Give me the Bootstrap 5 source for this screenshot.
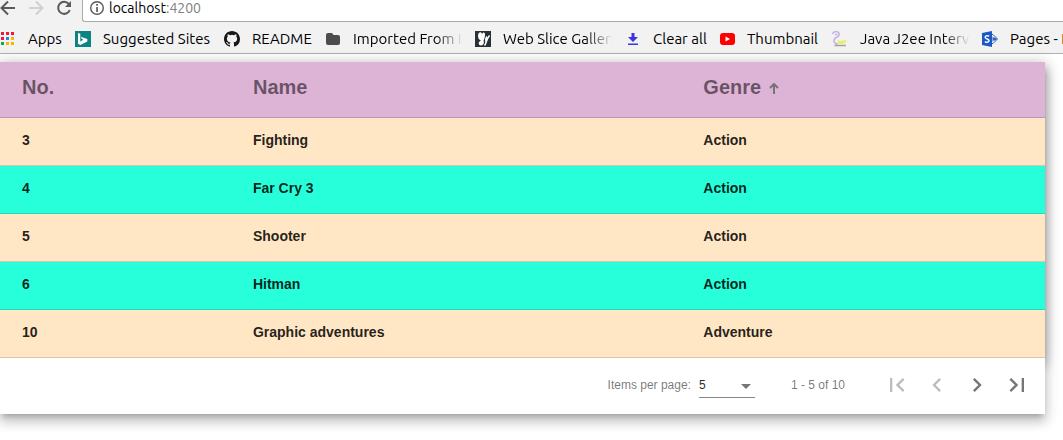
<!DOCTYPE html>
<html lang="en">
<head>
<meta charset="utf-8">
<meta name="viewport" content="width=device-width, initial-scale=1">
<title>Games table</title>
<link href="https://cdn.jsdelivr.net/npm/bootstrap@5.3.0/dist/css/bootstrap.min.css" rel="stylesheet">
<style>
  body { font-family: "Liberation Sans", Arial, sans-serif; background: #fff; overflow-x: hidden; }
  .browser { font-family: Ubuntu, "Noto Sans", sans-serif; font-size: 15px; line-height: 20px; color: #000; background: #f2f2f2; }
  .toolbar { height: 22px; }
  .tool-btn { width: 28px; height: 16px; padding: 0; border: 0; background: none; line-height: 0; text-align: left; }
  .tool-btn svg { display: block; }
  .address { height: 22px; border: solid #a9a9a9; border-width: 0 0 1px 1px; border-bottom-left-radius: 3px; background: #fff; padding: 0 6px 5px; margin-left: -2px; }
  .url { font-size: 14px; line-height: 16px; }
  .url span { color: #808080; }
  .bookmarks { height: 32px; border-bottom: 1px solid #b0b0b0; display: grid; grid-template-columns: 75px 149px 101px 150px 150px 94px 113px 150px 150px; overflow: hidden; }
  .bookmark { display: grid; grid-template-columns: 16px 1fr; column-gap: 12px; align-items: center; padding-right: 12px; color: #000; text-decoration: none; white-space: nowrap; min-width: 0; padding-top: 2px; }
  .bookmark span { overflow: hidden; }
  .bookmark.faded span { -webkit-mask-image: linear-gradient(to right, #000 75%, transparent); mask-image: linear-gradient(to right, #000 75%, transparent); }
  .elevated { box-shadow: 0 5px 5px -3px rgba(0,0,0,.2), 0 8px 10px 1px rgba(0,0,0,.14), 0 3px 14px 2px rgba(0,0,0,.12); }
  .page-area { padding: 8px 18px 24px 0; }
  .games { table-layout: fixed; width: 100%; border-collapse: separate; border-spacing: 0; font-weight: bold; color: rgba(0,0,0,.87); }
  .games th, .games td { padding: 0 0 2px 22px; border-bottom: 1px solid rgba(0,0,0,.14); }
  .games th { height: 56px; padding-bottom: 6px; font-size: 20px; color: rgba(0,0,0,.54); background: #ddb3d6; }
  .games td { height: 48px; font-size: 14px; background: #ffe6c4; }
  .games tr:nth-child(even) td { background: #26ffd9; }
  .col-no { width: 22.1%; }
  .col-name { width: 43.1%; }
  .sort { border: 0; padding: 0; background: none; font: inherit; color: inherit; }
  .pager { min-height: 56px; padding: 0 8px 2px 0; font-size: 12px; color: rgba(0,0,0,.54); background: #fff; }
  .size-box { width: 56px; margin: 0 36px 0 8px; }
  .size-box select { appearance: none; width: 56px; height: 26px; border: 0; border-bottom: 1px solid #888; border-radius: 0; padding: 0; background: none; font-size: 12px; color: rgba(0,0,0,.87); }
  .size-box svg { right: 4px; top: 12px; pointer-events: none; }
  .page-btn { width: 40px; height: 40px; padding: 6px; border: 0; background: none; color: #757575; line-height: 0; }
  .page-btn:disabled { color: #bdbdbd; }
  .page-btns { margin-left: 32px; }
</style>
</head>
<body>
<header class="browser">
  <div class="toolbar d-flex overflow-hidden">
    <button class="tool-btn" type="button" aria-label="Back"><svg width="16" height="16" viewBox="0 0 16 16" fill="none" stroke="#5a5a5a" stroke-width="2"><path d="M15 8H2M8 1.500L1.500 8L8 14.500"/></svg></button>
    <button class="tool-btn" type="button" aria-label="Forward"><svg width="16" height="16" viewBox="0 0 16 16" fill="none" stroke="#d0d0d0" stroke-width="2"><path d="M1 8h13M8 1.500L14.500 8L8 14.500"/></svg></button>
    <button class="tool-btn" type="button" aria-label="Reload"><svg width="16" height="16" viewBox="0 0 16 16"><path d="M12.800 4A6 6 0 1 0 13.800 10" fill="none" stroke="#5a5a5a" stroke-width="2"/><path d="M15 1v6H9z" fill="#5a5a5a"/></svg></button>
    <div class="address d-flex align-items-center flex-grow-1 gap-1">
      <svg width="16" height="16" viewBox="0 0 16 16"><circle cx="8" cy="8" r="6.300" fill="none" stroke="#5a5a5a" stroke-width="1.400"/><path d="M7.200 7h1.700v5H7.200zM7.200 4h1.700v1.700H7.200z" fill="#5a5a5a"/></svg>
      <div class="url">localhost<span>:4200</span></div>
    </div>
  </div>
  <nav class="bookmarks" aria-label="Bookmarks">
    <a class="bookmark" href="#"><svg width="16" height="16" viewBox="0 0 16 16"><path fill="#f0193c" d="M1 1h3v3H1zM6 1h3v3H6zM11 1h3v3h-3zM1 6h3v3H1z"/><path fill="#3b78e7" d="M6 6h3v3H6z"/><path fill="#fbb400" d="M11 6h3v3h-3zM6 11h3v3H6zM11 11h3v3h-3z"/><path fill="#12a55c" d="M1 11h3v3H1z"/></svg><span>Apps</span></a>
    <a class="bookmark" href="#"><svg width="16" height="16" viewBox="0 0 16 16"><path fill="#0c8484" d="M0 0h16v16H0z"/><path fill="#fff" d="M3 2l2.300.8v7.700l3-1.700-1.500-.8-1-2.300 6.500 2.200v2.700L5.300 14 3 12.700z"/></svg><span>Suggested Sites</span></a>
    <a class="bookmark" href="#"><svg width="16" height="16" viewBox="0 0 16 16" fill="#191717"><path d="M8 0C3.580 0 0 3.580 0 8c0 3.540 2.290 6.530 5.470 7.590.4.070.55-.17.55-.38 0-.19-.01-.82-.01-1.490-2.010.37-2.530-.49-2.690-.94-.09-.23-.48-.94-.82-1.130-.28-.15-.68-.52-.01-.53.63-.01 1.080.58 1.230.82.72 1.210 1.870.87 2.330.66.070-.52.280-.87.510-1.070-1.780-.2-3.640-.89-3.640-3.950 0-.87.310-1.590.82-2.150-.08-.2-.36-1.020.08-2.120 0 0 .67-.21 2.200.82a7.600 7.600 0 0 1 4 0c1.530-1.040 2.200-.82 2.200-.82.44 1.100.16 1.920.08 2.120.51.560.82 1.270.82 2.150 0 3.070-1.870 3.750-3.650 3.950.29.25.54.73.54 1.480 0 1.070-.01 1.930-.01 2.200 0 .21.15.46.55.38A8 8 0 0 0 16 8c0-4.420-3.580-8-8-8z"/></svg><span>README</span></a>
    <a class="bookmark faded" href="#"><svg width="16" height="16" viewBox="0 0 16 16"><path fill="#4d4d4d" d="M1 4q0-2 2-2h4l1.500 2H13q2 0 2 2v6q0 2-2 2H3q-2 0-2-2z"/></svg><span>Imported From IE</span></a>
    <a class="bookmark faded" href="#"><svg width="16" height="16" viewBox="0 0 16 16"><path fill="#273136" d="M0 0h16v16H0z"/><path fill="#fff" d="M6 9.500C3 9 2 3 4.500 1.500 6 .5 7 2 7 3 8 .5 10.500 1 10 4.500 9.800 7 9 8.500 8.500 9.500c1 2 0 5-2.500 5s-3.500-3.500 0-5z"/><path fill="none" stroke="#fff" stroke-width="1.500" d="M9.500 14.500C11.500 12 11 9 14.500 4.500M11 11c-.5-2-.3-4 .8-5.500"/></svg><span>Web Slice Gallery</span></a>
    <a class="bookmark" href="#"><svg width="16" height="16" viewBox="0 0 16 16" fill="#3b35e0"><path d="M6.500 2h3v4H13L8 11 3 6h3.500zM3 12.500h10V14H3z"/></svg><span>Clear all</span></a>
    <a class="bookmark" href="#"><svg width="16" height="16" viewBox="0 0 16 16"><rect x="1" y="2" width="15" height="12" rx="3" fill="#f00"/><path d="M6.500 5.500v5L11 8z" fill="#fff"/></svg><span>Thumbnail</span></a>
    <a class="bookmark faded" href="#"><svg width="16" height="16" viewBox="0 0 16 16"><path fill="none" stroke="#c4b2e6" stroke-width="1.500" d="M.5 3C2 0 5 0 6.500 1.500S7 5 5 6 1.500 8 2 10.500 4 13 6 13M3 3.500h2.500"/><path fill="#e6f06a" d="M6 9c2 2 4 0 8.500 0C14 12 12 13 9 13S5 12 6 9z"/><path stroke="#aaa095" stroke-width="1.500" d="M2.500 14.500H14"/></svg><span>Java J2ee Interview</span></a>
    <a class="bookmark" href="#"><svg width="16" height="16" viewBox="0 0 16 16"><path fill="none" stroke="#2460c5" d="M9 3.500h2L15.500 8 11 12.500H9"/><path fill="none" stroke="#2460c5" d="M10 5.500L12.500 8 10 10.500M10 8h5"/><circle cx="12.500" cy="8" r="1.500" fill="#2460c5"/><path fill="#1b59c5" d="M0 2l10-2v16L0 14z"/><path fill="none" stroke="#fff" stroke-width="1.500" d="M7.200 5.200C5 4 3 5 3.200 6.500S7 8 7 9.500 5 12 2.800 10.700"/></svg><span>Pages - Home</span></a>
  </nav>
</header>

<main class="page-area">
  <div class="elevated">
    <table class="games elevated">
      <colgroup><col class="col-no"><col class="col-name"><col></colgroup>
      <thead>
        <tr><th scope="col">No.</th><th scope="col">Name</th><th scope="col" aria-sort="ascending"><button type="button" class="sort d-flex align-items-center">Genre<svg class="ms-2 mt-1" width="10" height="12" viewBox="0 0 10 12" fill="none" stroke="#757575" stroke-width="2"><path d="M5 11V1M1 5l4-4 4 4"/></svg></button></th></tr>
      </thead>
      <tbody>
        <tr><td>3</td><td>Fighting</td><td>Action</td></tr>
        <tr><td>4</td><td>Far Cry 3</td><td>Action</td></tr>
        <tr><td>5</td><td>Shooter</td><td>Action</td></tr>
        <tr><td>6</td><td>Hitman</td><td>Action</td></tr>
        <tr><td>10</td><td>Graphic adventures</td><td>Adventure</td></tr>
      </tbody>
    </table>
    <div class="pager position-relative d-flex align-items-center justify-content-end">
      <label for="pageSize">Items per page:</label>
      <div class="size-box position-relative">
        <select id="pageSize"><option>5</option><option>10</option><option>20</option></select>
        <svg class="position-absolute" width="10" height="5" viewBox="0 0 10 5"><path fill="#757575" d="M0 0h10L5 5z"/></svg>
      </div>
      <div>1 - 5 of 10</div>
      <div class="page-btns d-flex">
        <button class="page-btn" type="button" disabled aria-label="First page"><svg width="28" height="28" viewBox="0 0 24 24" fill="currentColor"><path d="M18.410 16.590L13.820 12l4.590-4.590L17 6l-6 6 6 6zM6 6h2v12H6z"/></svg></button>
        <button class="page-btn" type="button" disabled aria-label="Previous page"><svg width="28" height="28" viewBox="0 0 24 24" fill="currentColor"><path d="M15.410 7.410L14 6l-6 6 6 6 1.410-1.410L10.830 12z"/></svg></button>
        <button class="page-btn" type="button" aria-label="Next page"><svg width="28" height="28" viewBox="0 0 24 24" fill="currentColor"><path d="M10 6L8.590 7.410 13.170 12l-4.580 4.590L10 18l6-6z"/></svg></button>
        <button class="page-btn" type="button" aria-label="Last page"><svg width="28" height="28" viewBox="0 0 24 24" fill="currentColor"><path d="M5.590 7.410L10.180 12l-4.590 4.590L7 18l6-6-6-6zM16 6h2v12h-2z"/></svg></button>
      </div>
    </div>
  </div>
</main>
<script src="https://cdn.jsdelivr.net/npm/bootstrap@5.3.0/dist/js/bootstrap.bundle.min.js"></script>
</body>
</html>
